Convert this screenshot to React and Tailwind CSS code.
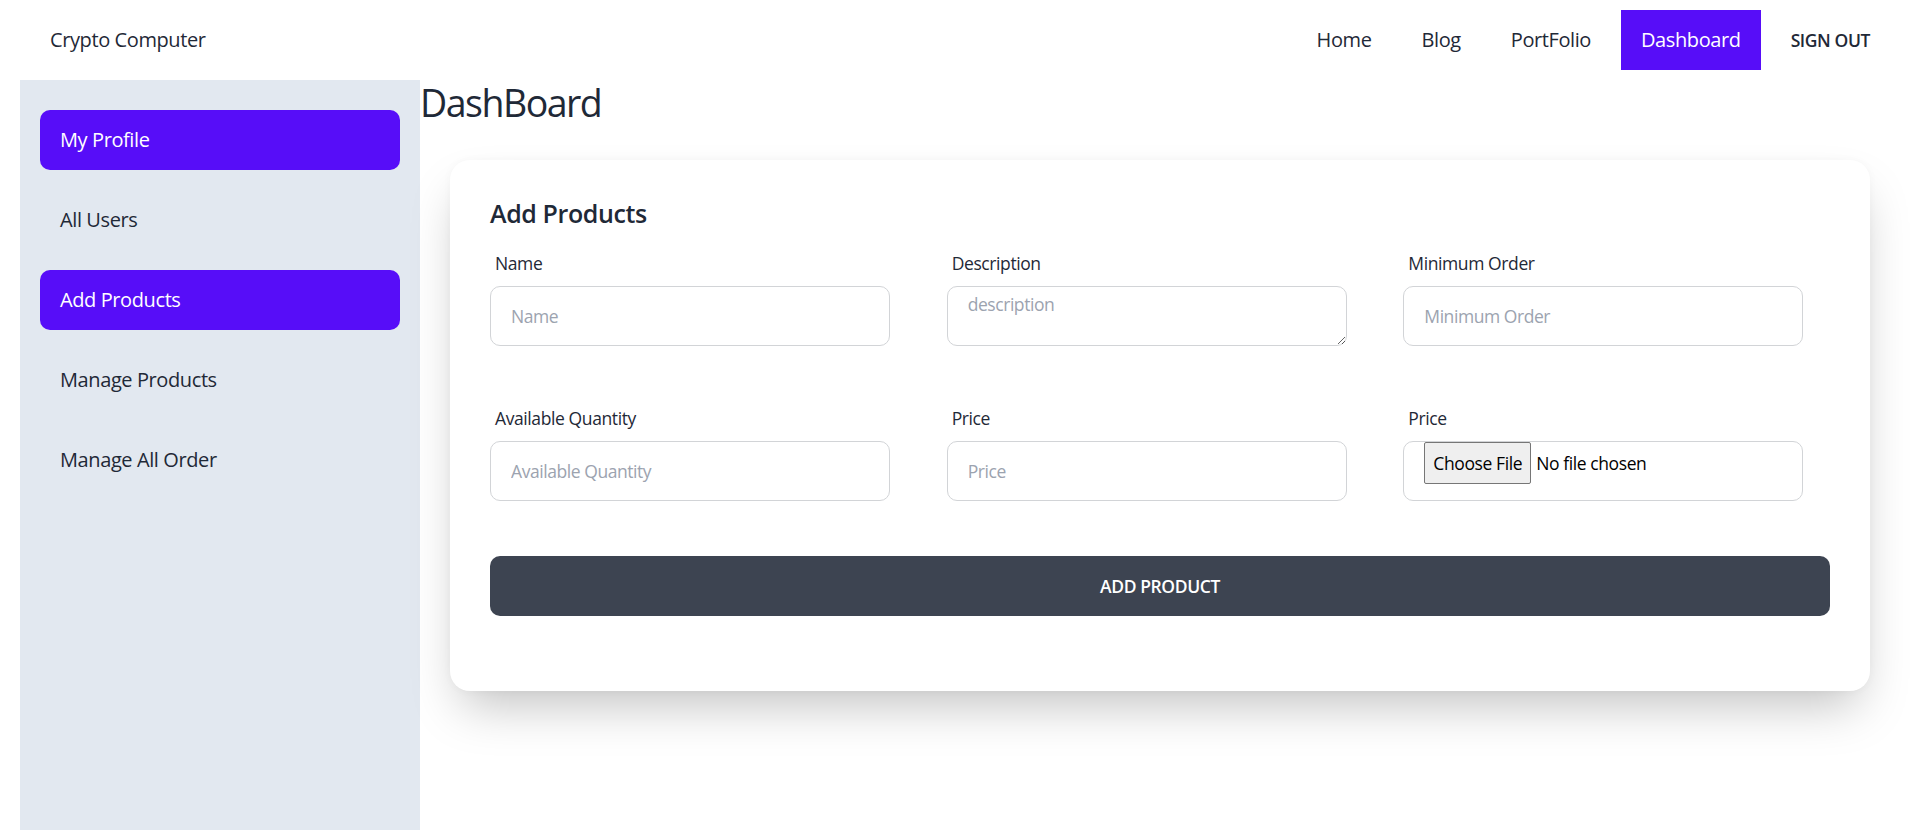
import React from 'react';

const navLinks = ['Home', 'Blog', 'PortFolio'];

const menu = [
  { label: 'My Profile', active: true },
  { label: 'All Users' },
  { label: 'Add Products', active: true },
  { label: 'Manage Products' },
  { label: 'Manage All Order' },
];

const Field = ({ label, children }) => (
  <div className="flex flex-col">
    <label className="px-[5px] py-[10px] text-[17.5px] leading-[25px]">{label}</label>
    {children}
  </div>
);

const inputCls =
  'w-full max-w-[400px] h-[60px] border border-[#d2d4d7] rounded-[10px] px-5 text-[17.5px] tracking-[-0.025em] outline-none placeholder:text-[#9ca3af] bg-white';

const App = () => {
  return (
    <div className="min-h-screen flex flex-col bg-white text-[#1f2937] tracking-[-0.025em] font-['Open_Sans','Noto_Sans',sans-serif]">
      <header className="h-20 px-[30px] flex items-center justify-between">
        <a className="px-5 text-[20px]">Crypto Computer</a>
        <nav className="flex items-center gap-[10px]">
          {navLinks.map(link => (
            <a key={link} className="h-[60px] px-5 flex items-center text-[20px]">
              {link}
            </a>
          ))}
          <a className="h-[60px] px-5 flex items-center text-[20px] bg-[#570df8] text-white">Dashboard</a>
          <button className="h-[60px] px-5 flex items-center text-[17.5px] font-semibold uppercase">Sign Out</button>
        </nav>
      </header>

      <div className="flex-1 flex px-5">
        <aside className="w-[400px] shrink-0 bg-slate-200 px-5 pt-[30px] flex flex-col gap-5">
          {menu.map(item => (
            <a
              key={item.label}
              className={
                item.active
                  ? 'h-[60px] px-5 flex items-center rounded-[10px] text-[20px] bg-[#570df8] text-white'
                  : 'h-[60px] px-5 flex items-center rounded-[10px] text-[20px]'
              }
            >
              {item.label}
            </a>
          ))}
        </aside>

        <main className="flex-1">
          <h1 className="text-[37.5px] leading-[45px] tracking-[-0.04em]">DashBoard</h1>

          <div className="mx-[30px] mt-[35px] bg-white rounded-[20px] px-10 pt-[36px] pb-[75px] shadow-[0_25px_50px_-12px_rgba(0,0,0,0.25),0_0_10px_rgba(0,0,0,0.03)]">
            <h2 className="text-[25px] leading-[35px] font-semibold mb-[10px]">Add Products</h2>

            <div className="grid grid-cols-3 gap-x-[30px] gap-y-[50px]">
              <Field label="Name">
                <input type="text" placeholder="Name" className={inputCls} />
              </Field>
              <Field label="Description">
                <textarea
                  placeholder="description"
                  className="w-full max-w-[400px] h-[60px] border border-[#d2d4d7] rounded-[10px] px-5 pt-[5px] text-[17.5px] leading-[25px] tracking-[-0.025em] outline-none placeholder:text-[#9ca3af] bg-white"
                />
              </Field>
              <Field label="Minimum Order">
                <input type="number" placeholder="Minimum Order" className={inputCls} />
              </Field>
              <Field label="Available Quantity">
                <input type="number" placeholder="Available Quantity" className={inputCls} />
              </Field>
              <Field label="Price">
                <input type="number" placeholder="Price" className={inputCls} />
              </Field>
              <Field label="Price">
                <div className="w-full max-w-[400px] h-[60px] border border-[#d2d4d7] rounded-[10px] pl-5 flex items-start">
                  <span className="h-[42px] px-[8px] flex items-center bg-[#efefef] border border-[#767676] rounded-[2px] text-[17.5px] text-black">
                    Choose File
                  </span>
                  <span className="h-[42px] ml-[5px] flex items-center text-[17.5px] text-black">No file chosen</span>
                </div>
              </Field>
            </div>

            <button className="mt-[55px] w-full h-[60px] rounded-[10px] bg-[#3d4451] text-white text-[17.5px] font-semibold uppercase">
              Add Product
            </button>
          </div>
        </main>
      </div>
    </div>
  );
};

export default App;
